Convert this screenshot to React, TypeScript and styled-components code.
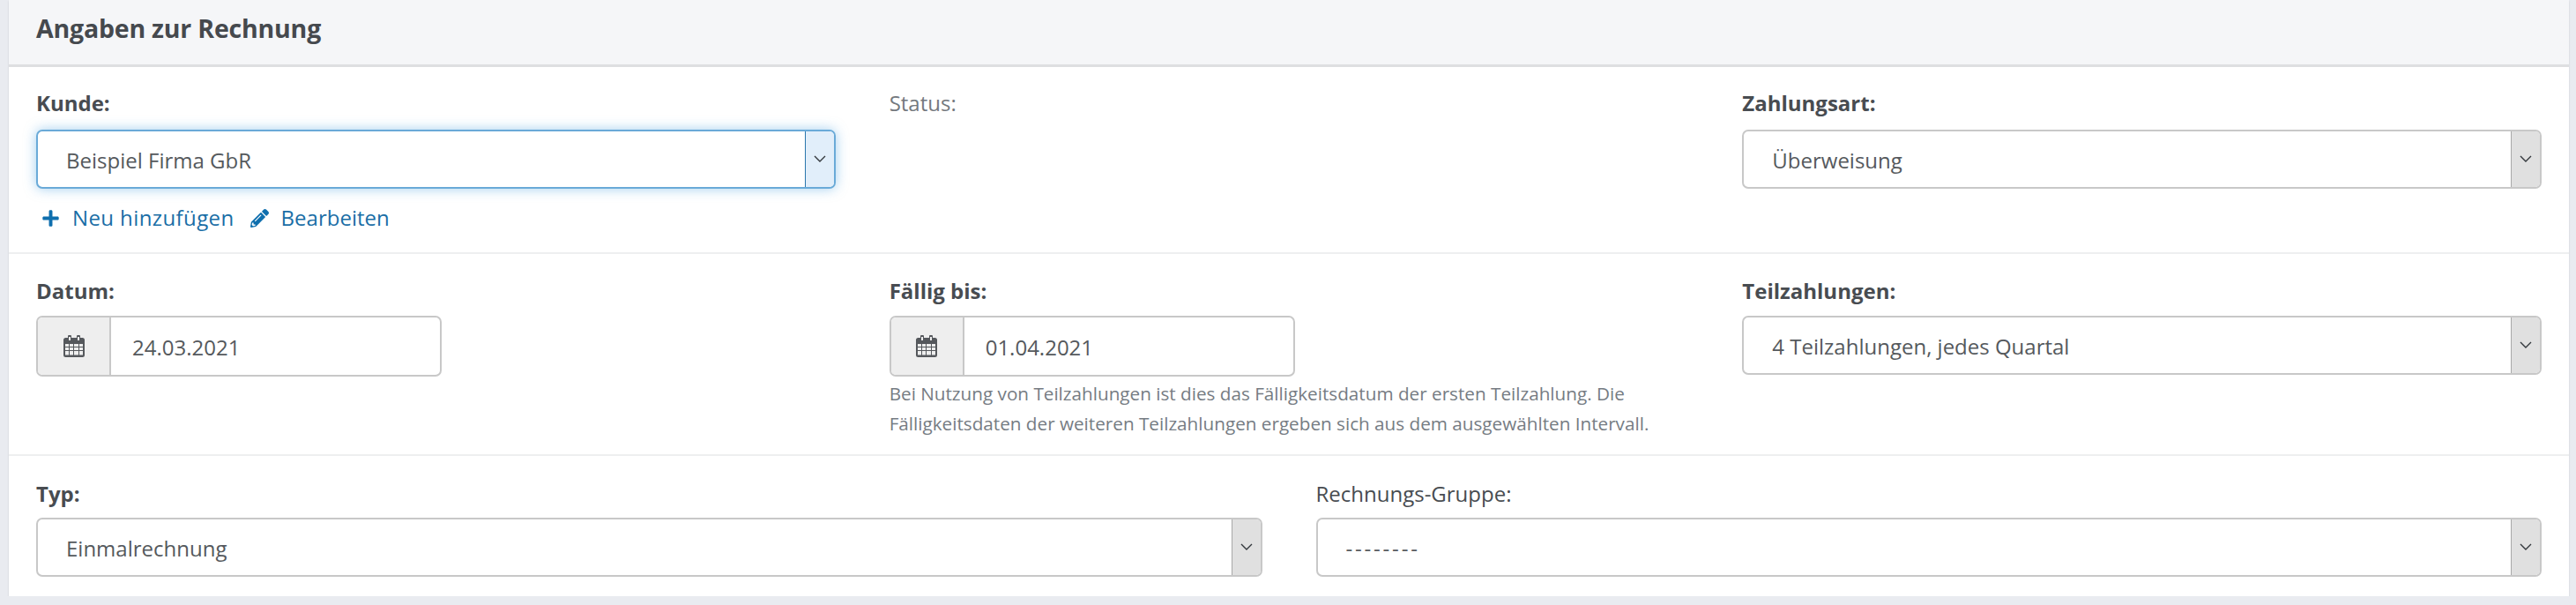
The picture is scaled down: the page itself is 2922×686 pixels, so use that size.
import React from "react";
import styled, { createGlobalStyle } from "styled-components";
import { FaPencilAlt, FaPlus } from "react-icons/fa";

const GlobalStyle = createGlobalStyle`
  * {
    box-sizing: border-box;
  }
  html, body {
    margin: 0;
    padding: 0;
    background: #e9ebf0;
  }
  body {
    font-family: "Open Sans", "Liberation Sans", sans-serif;
    color: #484c51;
  }
`;

const Card = styled.section`
  margin: 0 8px 0 10px;
  height: 676px;
  background: #fff;
  box-shadow: 0 1px 2px rgba(0, 0, 0, 0.12);
`;

const CardHeader = styled.header`
  height: 76px;
  padding: 12px 31px 0;
  background: #f5f6f8;
  border-bottom: 3px solid #dedfe1;
`;

const Title = styled.h2`
  margin: 0;
  font-size: 28.5px;
  line-height: 40px;
  font-weight: 700;
  letter-spacing: -0.2px;
  color: #45494e;
`;

const Label = styled.label<{ $plain?: boolean; $muted?: boolean }>`
  display: block;
  font-size: 24px;
  line-height: 36px;
  font-weight: ${(p) => (p.$plain ? 400 : 700)};
  color: ${(p) => (p.$muted ? "#74797e" : "#484c51")};
`;

const Row = styled.div<{
  $columns: number;
  $top: number;
  $height: number;
  $labelGap: number;
  $divider?: boolean;
}>`
  display: grid;
  grid-template-columns: repeat(${(p) => p.$columns}, 1fr);
  column-gap: 61px;
  align-items: start;
  height: ${(p) => p.$height}px;
  padding: ${(p) => p.$top}px 31px 0;
  border-bottom: ${(p) => (p.$divider ? "2px solid #eeeff0" : "none")};

  ${Label} {
    margin-bottom: ${(p) => p.$labelGap}px;
  }
`;

const SelectBox = styled.div<{ $focused?: boolean }>`
  display: flex;
  align-items: stretch;
  height: 67px;
  border: 2px solid ${(p) => (p.$focused ? "#6aaad8" : "#c8c8c8")};
  border-radius: 7px;
  background: #fff;
  box-shadow: ${(p) => (p.$focused ? "0 0 14px rgba(84, 165, 225, 0.55)" : "none")};
  overflow: hidden;
`;

const SelectValue = styled.span<{ $wide?: boolean }>`
  flex: 1;
  padding-left: 32px;
  font-size: 24px;
  line-height: 65px;
  letter-spacing: ${(p) => (p.$wide ? "2.8px" : "0")};
  color: #55595d;
`;

const SelectArrow = styled.span<{ $focused?: boolean }>`
  display: flex;
  align-items: center;
  justify-content: center;
  width: 33px;
  background: ${(p) => (p.$focused ? "#e1eefa" : "#e0e0e0")};
  border-left: 1px solid ${(p) => (p.$focused ? "#2a76ad" : "#a8a8a8")};
`;

const Chevron = () => (
  <svg width="14" height="9" viewBox="0 0 14 9" fill="none">
    <path d="M1 1l6 6 6-6" stroke="#33383d" strokeWidth="1.4" />
  </svg>
);

const LinkRow = styled.div`
  display: flex;
  align-items: center;
  height: 36px;
  margin-top: 15px;
  padding-left: 6px;
`;

const ActionLink = styled.a<{ $tracked?: boolean }>`
  display: flex;
  align-items: center;
  gap: 14px;
  margin-right: 18px;
  font-size: 24px;
  line-height: 36px;
  letter-spacing: ${(p) => (p.$tracked ? "0.4px" : "0")};
  color: #1a6ea6;
  text-decoration: none;

  svg {
    color: #0f6fae;
    font-size: 21px;
  }
`;

const DateGroup = styled.div`
  display: flex;
  width: 460px;
  height: 69px;
  border: 2px solid #c8c8c8;
  border-radius: 7px;
  overflow: hidden;
`;

const DateAddon = styled.span`
  display: flex;
  align-items: center;
  justify-content: center;
  width: 83px;
  background: #eeeeee;
  border-right: 2px solid #c8c8c8;
`;

const DateValue = styled.span`
  padding-left: 24px;
  font-size: 24px;
  line-height: 67px;
  color: #55595d;
`;

const CalendarIcon = () => (
  <svg width="24" height="25" viewBox="0 0 24 25">
    <path
      fill="#55585c"
      fillRule="evenodd"
      d="M5 1.5a2 2 0 0 1 4 0V3h6V1.5a2 2 0 0 1 4 0V3h2.5A2.5 2.5 0 0 1 24 5.500v17a2.500 2.500 0 0 1-2.500 2.500h-19A2.500 2.500 0 0 1 0 22.500v-17A2.500 2.500 0 0 1 2.500 3H5zM6 2v4h2V2zM16 2v4h2V2zM2 10v3h4v-3zM7 10v3h4v-3zM12 10v3h5v-3zM18 10v3h4v-3zM2 14v3h4v-3zM7 14v3h4v-3zM12 14v3h5v-3zM18 14v3h4v-3zM2 18v4.500h4V18zM7 18v4.500h4V18zM12 18v4.500h5V18zM18 18v4.500h4V18z"
    />
  </svg>
);

const HelpText = styled.small`
  display: block;
  margin-top: 2px;
  font-size: 20.7px;
  line-height: 34px;
  color: #767c83;
`;

interface SelectProps {
  value: string;
  focused?: boolean;
  wide?: boolean;
}

const Select = ({ value, focused, wide }: SelectProps): JSX.Element => (
  <SelectBox $focused={focused}>
    <SelectValue $wide={wide}>{value}</SelectValue>
    <SelectArrow $focused={focused}>
      <Chevron />
    </SelectArrow>
  </SelectBox>
);

const DateField = ({ value }: { value: string }): JSX.Element => (
  <DateGroup>
    <DateAddon>
      <CalendarIcon />
    </DateAddon>
    <DateValue>{value}</DateValue>
  </DateGroup>
);

const App = (): JSX.Element => (
  <>
    <GlobalStyle />
    <Card>
      <CardHeader>
        <Title>Angaben zur Rechnung</Title>
      </CardHeader>

      <Row $columns={3} $top={23} $height={212} $labelGap={12} $divider>
        <div>
          <Label>Kunde:</Label>
          <Select value="Beispiel Firma GbR" focused />
          <LinkRow>
            <ActionLink href="#" $tracked>
              <FaPlus />
              Neu hinzufügen
            </ActionLink>
            <ActionLink href="#">
              <FaPencilAlt />
              Bearbeiten
            </ActionLink>
          </LinkRow>
        </div>
        <div>
          <Label $plain $muted>
            Status:
          </Label>
        </div>
        <div>
          <Label>Zahlungsart:</Label>
          <Select value="Überweisung" />
        </div>
      </Row>

      <Row $columns={3} $top={24} $height={229} $labelGap={10} $divider>
        <div>
          <Label>Datum:</Label>
          <DateField value="24.03.2021" />
        </div>
        <div>
          <Label>Fällig bis:</Label>
          <DateField value="01.04.2021" />
          <HelpText>
            Bei Nutzung von Teilzahlungen ist dies das Fälligkeitsdatum der ersten Teilzahlung. Die
            Fälligkeitsdaten der weiteren Teilzahlungen ergeben sich aus dem ausgewählten Intervall.
          </HelpText>
        </div>
        <div>
          <Label>Teilzahlungen:</Label>
          <Select value="4 Teilzahlungen, jedes Quartal" />
        </div>
      </Row>

      <Row $columns={2} $top={25} $height={159} $labelGap={9}>
        <div>
          <Label>Typ:</Label>
          <Select value="Einmalrechnung" />
        </div>
        <div>
          <Label $plain>Rechnungs-Gruppe:</Label>
          <Select value="--------" wide />
        </div>
      </Row>
    </Card>
  </>
);

export default App;
